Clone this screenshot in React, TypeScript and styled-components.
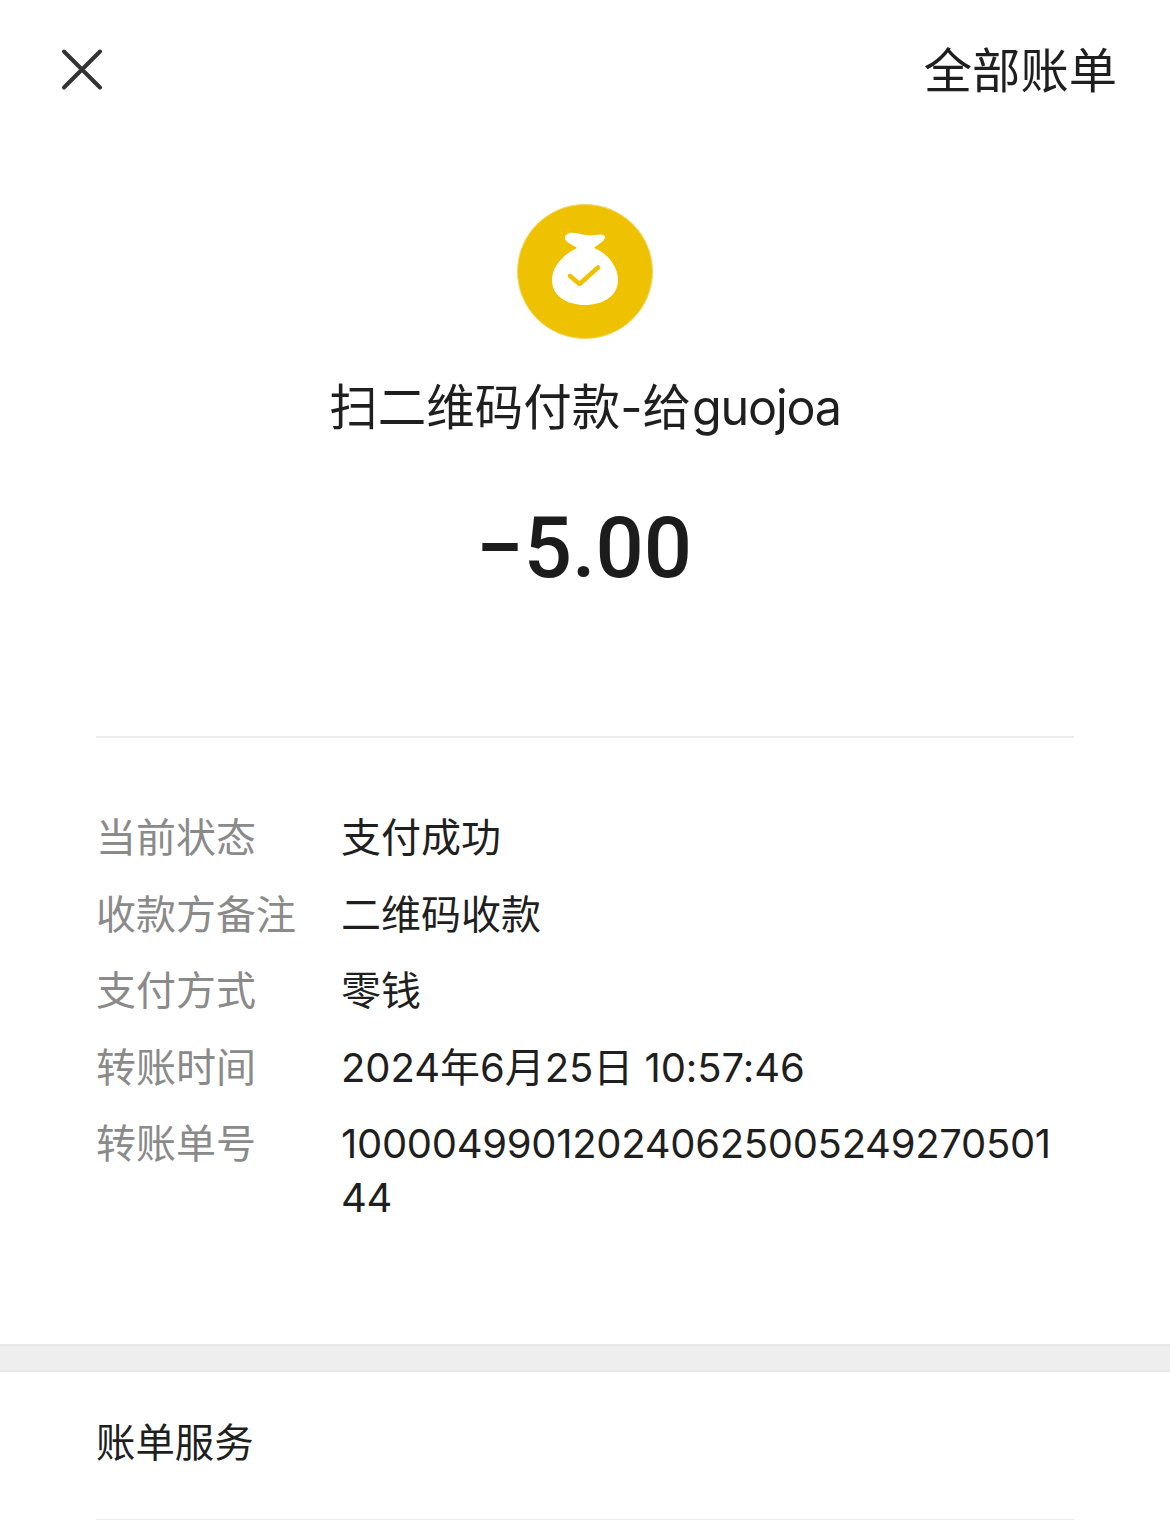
import React from "react";
import styled, { createGlobalStyle } from "styled-components";

const Global = createGlobalStyle`
  html, body { margin: 0; padding: 0; background: #fff; }
  body { font-family: Inter, "Noto Sans CJK SC", sans-serif; color: #1f1f1f; }
`;

const Page = styled.div`
  width: 1170px;
  height: 1520px;
  overflow: hidden;
`;

const TopBar = styled.header`
  height: 140px;
  padding: 0 53px 0 60px;
  display: flex;
  justify-content: space-between;
  align-items: center;
  box-sizing: border-box;
`;

const CloseButton = styled.div`
  width: 44px;
  height: 44px;
  display: block;
`;

const AllBills = styled.div`
  font-size: 48.3px;
  line-height: 60px;
  padding-top: 1px;
  color: #1f1f1f;
  font-weight: 400;
`;

const Summary = styled.section`
  display: flex;
  flex-direction: column;
  align-items: center;
  padding-top: 64px;
`;

const Title = styled.h1`
  margin: 27px 0 0;
  font-size: 48.5px;
  line-height: 84px;
  font-weight: 400;
  color: #1f1f1f;
`;

const Latin = styled.span`
  letter-spacing: -1.2px;
  margin-left: 1px;
`;

const Amount = styled.div`
  margin-top: 48px;
  padding-right: 2px;
  font-family: Roboto, sans-serif;
  font-size: 85px;
  line-height: 100px;
  font-weight: 500;
  color: #1c1c1c;
`;

const Rule = styled.hr<{ $top: number }>`
  margin: ${(p) => p.$top}px 96px 0;
  border: 0;
  height: 2px;
  background: #ececec;
`;

const Details = styled.dl`
  margin: 73px 100px 0 96px;
  display: grid;
  grid-template-columns: 245px 1fr;
  row-gap: 22.6px;
`;

const Label = styled.dt`
  font-size: 40px;
  line-height: 54px;
  color: #8a8a8a;
  font-weight: 400;
`;

const Value = styled.dd<{ $spacing: number }>`
  margin: 0;
  font-size: 40px;
  line-height: 54px;
  color: #1f1f1f;
  font-weight: 400;
  word-break: break-all;
  letter-spacing: ${(p) => p.$spacing}px;
`;

const Band = styled.div`
  margin-top: 119px;
  height: 24px;
  background: #eeeeee;
  border-top: 2px solid #e8e8e8;
  border-bottom: 2px solid #e8e8e8;
`;

const ServiceRow = styled.div`
  height: 147px;
  padding: 0 0 12px 96px;
  box-sizing: border-box;
  display: flex;
  align-items: center;
  font-size: 39.4px;
  font-weight: 400;
  color: #1f1f1f;
`;

const rows: [string, string, number][] = [
  ["当前状态", "支付成功", 0],
  ["收款方备注", "二维码收款", 0],
  ["支付方式", "零钱", 0],
  ["转账时间", "2024年6月25日 10:57:46", -0.05],
  ["转账单号", "10000499012024062500524927050144", -0.3],
];

export default function App() {
  return (
    <Page>
      <Global />
      <TopBar>
        <CloseButton>
          <svg width="44" height="44" viewBox="0 0 44 44">
            <path d="M4 3.5 L40 39.5 M40 3.5 L4 39.5" stroke="#333" strokeWidth="4" strokeLinecap="round" />
          </svg>
        </CloseButton>
        <AllBills>全部账单</AllBills>
      </TopBar>
      <Summary>
        <svg width="136" height="135" viewBox="0 0 136 135">
          <ellipse cx="68" cy="67.5" rx="67.5" ry="67" fill="#EEC200" stroke="#EFD868" strokeWidth="1" />
          <path
            d="M48 34 C48 28 56 28 62 29.5 C66 31 72 32 78 31 C83 30 88.5 30 88 33.5 C87 38 80 41 77 44 C90 49 101 62 101 76 C101 92 86 101 68 101 C50 101 35 92 35 76 C35 62 47 50 60 44 C57 41 48 39 48 34 Z"
            fill="#fff"
          />
          <path d="M53 72 L62.5 80 L81 63.5" stroke="#EEC200" strokeWidth="4.5" fill="none" strokeLinecap="round" strokeLinejoin="round" />
        </svg>
        <Title>扫二维码付款-给<Latin>guojoa</Latin></Title>
        <Amount>−5.00</Amount>
      </Summary>
      <Rule $top={138} />
      <Details>
        {rows.map(([k, v, n]) => (
          <React.Fragment key={k}>
            <Label>{k}</Label>
            <Value $spacing={n}>{v}</Value>
          </React.Fragment>
        ))}
      </Details>
      <Band />
      <ServiceRow>账单服务</ServiceRow>
      <Rule $top={0} />
    </Page>
  );
}
